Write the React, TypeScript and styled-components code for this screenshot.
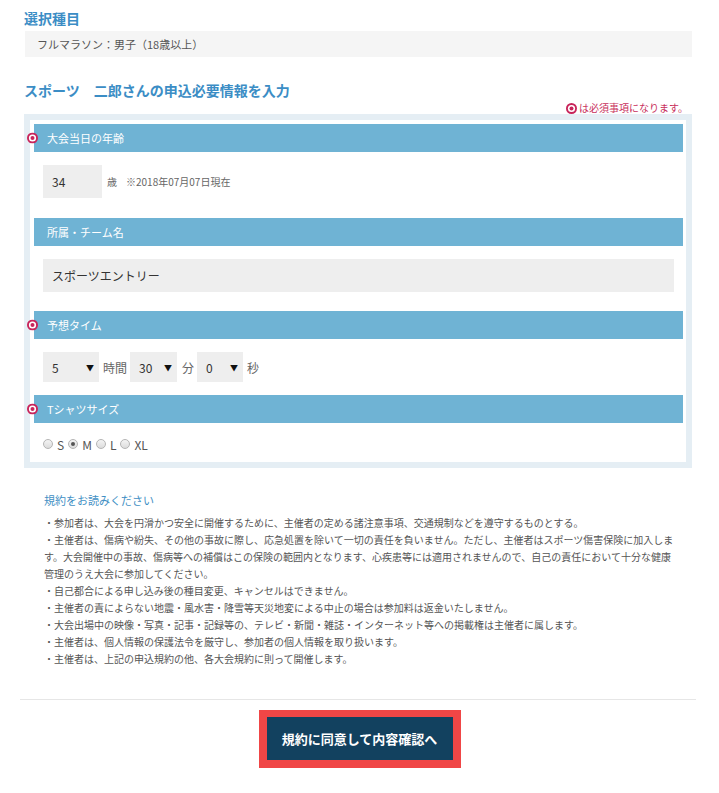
import React from "react";
import styled, { createGlobalStyle } from "styled-components";

const GlobalStyle = createGlobalStyle`
  html, body { margin: 0; padding: 0; background: #fff; }
  body { font-family: "Noto Sans CJK JP", "Noto Sans", sans-serif; color: #555; }
  * { box-sizing: border-box; }
`;

const Page = styled.div`
  width: 668px;
  margin-left: 24px;
  padding-top: 10px;
  padding-bottom: 30px;
`;

const SectionTitle = styled.h2<{ $mt?: number }>`
  margin: ${(p) => p.$mt ?? 0}px 0 0;
  font-size: 14px;
  line-height: 17px;
  font-weight: bold;
  color: #3b8dc5;
  letter-spacing: 0;
`;

const SelectedBox = styled.div`
  margin: 4px 0 0 1px;
  height: 26px;
  background: #f5f5f5;
  padding: 0 12px;
  display: flex;
  align-items: center;
  font-size: 11px;
  color: #555;
`;

const RequiredNote = styled.div`
  margin-top: 3px;
  padding-right: 4px;
  display: flex;
  justify-content: flex-end;
  align-items: center;
  gap: 2px;
  font-size: 10px;
  line-height: 12px;
  color: #c8305c;
`;

const FormFrame = styled.div`
  margin-top: 0;
  background: #e5eef4;
  padding: 6px;
`;

const FormInner = styled.div`
  background: #fff;
  padding: 4px 3px 0 4px;
`;

const FieldHeader = styled.div`
  position: relative;
  height: 28px;
  background: #6fb3d4;
  color: #fff;
  font-size: 11px;
  display: flex;
  align-items: center;
  padding-left: 13px;
`;

const MarkWrap = styled.span`
  position: absolute;
  left: -7px;
  top: 50%;
  transform: translateY(-50%);
  display: flex;
`;

const FieldBody = styled.div<{ $pb: number }>`
  padding: 13px 9px ${(p) => p.$pb}px;
  display: flex;
  align-items: center;
`;

const TextBox = styled.div<{ $w?: number }>`
  width: ${(p) => (p.$w ? `${p.$w}px` : "100%")};
  height: 33px;
  background: #eeeeee;
  display: flex;
  align-items: center;
  padding-left: 9px;
  font-size: 12px;
  color: #333;
`;

const Unit = styled.span<{ $ml?: number; $mr?: number; $size?: number }>`
  margin-left: ${(p) => p.$ml ?? 0}px;
  margin-right: ${(p) => p.$mr ?? 0}px;
  font-size: ${(p) => p.$size ?? 10}px;
  color: #666;
`;

const SelectBox = styled.div<{ $w: number }>`
  width: ${(p) => p.$w}px;
  height: 30px;
  background: #eeeeee;
  display: flex;
  align-items: center;
  justify-content: space-between;
  padding: 0 5px 0 9px;
  font-size: 12px;
  color: #333;
`;

const Arrow = styled.span`
  font-size: 8px;
  color: #111;
`;

const RadioRow = styled.div`
  display: flex;
  align-items: center;
  height: 16px;
  font-size: 12px;
  color: #555;
`;

const Radio = styled.span<{ $checked?: boolean }>`
  width: 10px;
  height: 10px;
  border-radius: 50%;
  border: 1px solid #b5b5b5;
  background: linear-gradient(#f4f4f4, #dcdcdc);
  display: inline-flex;
  align-items: center;
  justify-content: center;
  margin-right: 4px;
  &::after {
    content: "";
    width: 4px;
    height: 4px;
    border-radius: 50%;
    background: ${(p) => (p.$checked ? "#555" : "transparent")};
  }
`;

const RadioLabel = styled.span`
  margin-right: 4px;
`;

const Terms = styled.div`
  margin-top: 23px;
  padding: 0 14px 0 20px;
`;

const TermsTitle = styled.div`
  font-size: 11px;
  line-height: 18px;
  color: #3f8fc4;
`;

const TermsList = styled.div`
  margin-top: 5px;
  font-size: 10px;
  line-height: 17px;
  color: #555;
`;

const TermsLine = styled.p`
  margin: 0;
`;

const Divider = styled.hr`
  margin: 32px -4px 0;
  border: 0;
  border-top: 1px solid #e6e6e6;
`;

const ButtonRow = styled.div`
  margin-top: 10px;
  display: flex;
  justify-content: center;
  padding-left: 3px;
`;

const Highlight = styled.div`
  background: #f04646;
  padding: 7px 8px 8px 8px;
`;

const SubmitButton = styled.button`
  width: 186px;
  height: 43px;
  border: 0;
  background: #12415f;
  color: #fff;
  font-family: "Noto Sans CJK JP", sans-serif;
  font-size: 13px;
  font-weight: bold;
  cursor: pointer;
`;

const RequiredMark = () => (
  <svg width="11" height="11" viewBox="0 0 11 11">
    <circle cx="5.5" cy="5.5" r="5.5" fill="#c8245a" />
    <circle cx="5.5" cy="5.5" r="3.6" fill="#fff" />
    <circle cx="5.5" cy="5.5" r="2" fill="#c8245a" />
  </svg>
);

const Field = ({
  title,
  required,
  pb,
  children,
}: {
  title: string;
  required?: boolean;
  pb: number;
  children: React.ReactNode;
}) => (
  <div>
    <FieldHeader>
      {required && (
        <MarkWrap>
          <RequiredMark />
        </MarkWrap>
      )}
      {title}
    </FieldHeader>
    <FieldBody $pb={pb}>{children}</FieldBody>
  </div>
);

const terms = [
  "・参加者は、大会を円滑かつ安全に開催するために、主催者の定める諸注意事項、交通規制などを遵守するものとする。",
  "・主催者は、傷病や紛失、その他の事故に際し、応急処置を除いて一切の責任を負いません。ただし、主催者はスポーツ傷害保険に加入します。大会開催中の事故、傷病等への補償はこの保険の範囲内となります、心疾患等には適用されませんので、自己の責任において十分な健康管理のうえ大会に参加してください。",
  "・自己都合による申し込み後の種目変更、キャンセルはできません。",
  "・主催者の責によらない地震・風水害・降雪等天災地変による中止の場合は参加料は返金いたしません。",
  "・大会出場中の映像・写真・記事・記録等の、テレビ・新聞・雑誌・インターネット等への掲載権は主催者に属します。",
  "・主催者は、個人情報の保護法令を厳守し、参加者の個人情報を取り扱います。",
  "・主催者は、上記の申込規約の他、各大会規約に則って開催します。",
];

const sizes = [
  { label: "S", checked: false },
  { label: "M", checked: true },
  { label: "L", checked: false },
  { label: "XL", checked: false },
];

export default function App() {
  return (
    <>
      <GlobalStyle />
      <Page>
        <SectionTitle>選択種目</SectionTitle>
        <SelectedBox>フルマラソン：男子（18歳以上）</SelectedBox>

        <SectionTitle $mt={25}>スポーツ　二郎さんの申込必要情報を入力</SectionTitle>
        <RequiredNote>
          <RequiredMark />
          は必須事項になります。
        </RequiredNote>

        <FormFrame>
          <FormInner>
            <Field title="大会当日の年齢" required pb={20}>
              <TextBox $w={59}>34</TextBox>
              <Unit $ml={5} $mr={9}>歳</Unit>
              <Unit>※2018年07月07日現在</Unit>
            </Field>
            <Field title="所属・チーム名" pb={19}>
              <TextBox>スポーツエントリー</TextBox>
            </Field>
            <Field title="予想タイム" required pb={13}>
              <SelectBox $w={56}>
                5<Arrow>▼</Arrow>
              </SelectBox>
              <Unit $ml={4} $mr={3} $size={12}>時間</Unit>
              <SelectBox $w={47}>
                30<Arrow>▼</Arrow>
              </SelectBox>
              <Unit $ml={5} $mr={3} $size={12}>分</Unit>
              <SelectBox $w={46}>
                0<Arrow>▼</Arrow>
              </SelectBox>
              <Unit $ml={4} $size={12}>秒</Unit>
            </Field>
            <Field title="Tシャツサイズ" required pb={10}>
              <RadioRow>
                {sizes.map((s) => (
                  <React.Fragment key={s.label}>
                    <Radio $checked={s.checked} />
                    <RadioLabel>{s.label}</RadioLabel>
                  </React.Fragment>
                ))}
              </RadioRow>
            </Field>
          </FormInner>
        </FormFrame>

        <Terms>
          <TermsTitle>規約をお読みください</TermsTitle>
          <TermsList>
            {terms.map((t, i) => (
              <TermsLine key={i}>{t}</TermsLine>
            ))}
          </TermsList>
        </Terms>

        <Divider />
        <ButtonRow>
          <Highlight>
            <SubmitButton>規約に同意して内容確認へ</SubmitButton>
          </Highlight>
        </ButtonRow>
      </Page>
    </>
  );
}
